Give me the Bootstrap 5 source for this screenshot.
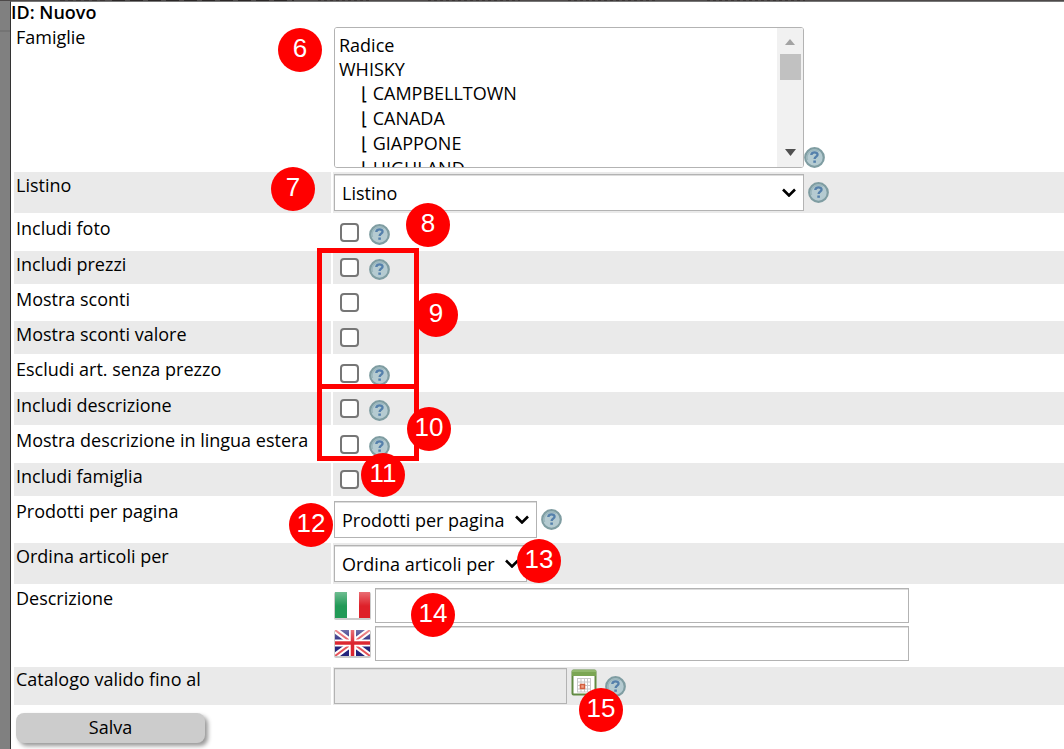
<!DOCTYPE html>
<html lang="it">
<head>
<meta charset="utf-8">
<meta name="viewport" content="width=device-width, initial-scale=1">
<title>Nuovo catalogo</title>
<link href="https://cdn.jsdelivr.net/npm/bootstrap@5.3.0/dist/css/bootstrap.min.css" rel="stylesheet">
<style>
  body { font-family: "Open Sans", "Noto Sans", sans-serif; font-size: 18px; line-height: 24px; color: #000; background: linear-gradient(#808080 30px, #747474 30px 32px, #808080 32px) no-repeat #808080; }
  .backdrop-top { height: 1px; background:
    repeating-linear-gradient(90deg, #3a3535 0 5px, #4d4949 5px 8px) 60px 0 / 48px 1px no-repeat,
    repeating-linear-gradient(90deg, #2b2727 0 13px, #4d4949 13px 18px) 112px 0 / 182px 1px no-repeat,
    repeating-linear-gradient(90deg, #3a3535 0 3px, #4d4949 3px 6px) 318px 0 / 54px 1px no-repeat,
    repeating-linear-gradient(90deg, #3a3535 0 3px, #4d4949 3px 6px) 428px 0 / 92px 1px no-repeat,
    repeating-linear-gradient(90deg, #3a3535 0 3px, #4d4949 3px 6px) 568px 0 / 90px 1px no-repeat,
    repeating-linear-gradient(90deg, #3a3535 0 3px, #4d4949 3px 6px) 707px 0 / 98px 1px no-repeat,
    #4d4949; }
  .sheet { margin-left: 10px; border-left: 1px solid #333; border-top: 1px solid #777; background: #fff; min-height: calc(100vh - 1px); }
  .sheet-title { font-size: 18px; font-weight: 600; line-height: 20px; margin: 0; }
  .form-rows { padding: 3px 0 0 3px; gap: 2px; }
  .form-line { display: grid; grid-template-columns: 317px 1fr; column-gap: 2px; min-height: 34px; }
  .form-line > * { padding: 1px 0 0 2px; }
  .form-line > :last-child { padding: 0 0 0 1px; }
  .form-line:nth-child(even) > * { background: #eaeaea; }
  .line-list { min-height: 145px; }
  .line-select { min-height: 41px; }
  .line-pages { min-height: 43px; }
  .line-short { min-height: 33px; }
  .line-text { min-height: 79px; }
  .line-date { min-height: 38px; }
  .line-list > label, .line-text > label, .line-date > label { padding-top: 0; }
  .field { border: 1px solid #b3b3b3; background-color: #fff; border-radius: 0; color: #000; height: 37px; box-shadow: inset 0 1px 0 #ddd; }
  .field-select { appearance: none; padding: 0 28px 0 7px; background-repeat: no-repeat; background-position: right 7px center;
    background-image: url("data:image/svg+xml,%3Csvg xmlns='http://www.w3.org/2000/svg' width='14' height='9' viewBox='0 0 14 9'%3E%3Cpath d='M1 1.5l6 6 6-6' fill='none' stroke='%23000' stroke-width='2.6'/%3E%3C/svg%3E"); }
  .w-wide { width: 470px; }
  .w-pages { width: 203px; }
  .w-order { width: 193px; }
  .w-text { width: 534px; height: 35px; }
  .w-date { width: 233px; height: 36px; background-color: #eaeaea; }
  .text-pair { gap: 3px; padding-bottom: 2px !important; }
  .list-cell { padding-bottom: 2px !important; }
  .family-list { width: 470px; height: 141px; border: 1px solid #b3b3b3; border-radius: 3px; padding: 5px 0 0; color: #000; background: #fff; overflow-y: scroll; scrollbar-width: none; }
  .family-list option { padding: 0 4px; min-height: 23px; }
  .family-list .sub { padding-left: 26px; min-height: 25px; }
  .family-scroll { position: absolute; top: 1px; right: 1px; bottom: 1px; width: 26px; background: #f1f1f1; border-radius: 0 2px 2px 0; padding: 11px 0; pointer-events: none; }
  .family-thumb { width: 21px; height: 26px; background: #c1c1c1; margin-top: 9px; }
  .tick.form-check-input { width: 19px; height: 19px; margin: 0 10px 0 6px; border: 2px solid #767676; border-radius: 4px; background-color: #fff; }
  .help { width: 21px; height: 21px; flex: none; }
  .flag { width: 37px; height: 29px; flex: none; }
  .save { width: 189px; height: 30px; border: 0; border-radius: 8px; background: #ccc; color: #000; box-shadow: 3px 3px 4px #999; margin: 6px 0 0 2px; padding: 0 0 3px; }
  .pin { position: absolute; width: 44px; height: 44px; border-radius: 50%; background: #f00; color: #fff; font: 26px/40px "Liberation Sans", sans-serif; text-align: center; }
  .frame { position: absolute; border: 5px solid #f00; }
  #frame-a { left: 317px; top: 248px; width: 102px; height: 141px; }
  #frame-b { left: 317px; top: 384px; width: 102px; height: 77px; }
  #pin-6 { left: 278px; top: 28px; }
  #pin-7 { left: 271px; top: 167px; }
  #pin-8 { left: 406px; top: 203px; }
  #pin-9 { left: 414px; top: 293px; }
  #pin-10 { left: 407px; top: 407px; }
  #pin-11 { left: 361px; top: 453px; }
  #pin-12 { left: 289px; top: 503px; }
  #pin-13 { left: 517px; top: 539px; }
  #pin-14 { left: 411px; top: 593px; }
  #pin-15 { left: 579px; top: 688px; }
</style>
</head>
<body class="position-relative">
<svg class="d-none" aria-hidden="true">
  <symbol id="i-help" viewBox="0 0 21 21">
    <circle cx="10.500" cy="10.500" r="9.300" fill="#b5cbd1" stroke="#7f9da2" stroke-width="2.200"/>
    <path d="M3.500 13A7.500 7.500 0 0 1 15 4.500" fill="none" stroke="#9bb7bd" stroke-width="1.500"/>
    <path d="M7.300 8c.2-3.600 6.600-3.400 6.200-.2-.2 1.900-2.700 1.900-2.900 4.200" fill="none" stroke="#5580ab" stroke-width="2.400"/>
    <rect x="9.300" y="13.500" width="2.600" height="2.300" fill="#5580ab"/>
  </symbol>
</svg>
<div class="backdrop-top"></div>
<main class="sheet">
  <h1 class="sheet-title">ID: Nuovo</h1>
  <form class="form-rows d-flex flex-column">
    <div class="form-line line-list">
      <label for="famiglie">Famiglie</label>
      <div class="list-cell d-flex align-items-end">
        <div class="position-relative d-flex">
          <select id="famiglie" class="family-list" multiple>
            <option>Radice</option><option>WHISKY</option>
            <option class="sub">⌊ CAMPBELLTOWN</option><option class="sub">⌊ CANADA</option><option class="sub">⌊ GIAPPONE</option><option class="sub">⌊ HIGHLAND</option>
            <option class="sub">⌊ INDIA</option><option class="sub">⌊ IRLANDA</option><option class="sub">⌊ ISLAY</option><option class="sub">⌊ ISOLE</option><option class="sub">⌊ ITALIA</option><option class="sub">⌊ LOWLAND</option>
            <option class="sub">⌊ SPEYSIDE</option><option class="sub">⌊ TAIWAN</option><option class="sub">⌊ USA</option>
            <option>RUM</option><option>GIN</option><option>VODKA</option><option>COGNAC</option><option>GRAPPA</option><option>VINI</option>
          </select>
          <div class="family-scroll d-flex flex-column align-items-center" aria-hidden="true">
            <svg width="10" height="6"><path d="M0 6l5-6 5 6z" fill="#a3a3a3"/></svg>
            <div class="family-thumb"></div>
            <svg class="mt-auto" width="11" height="7"><path d="M0 0h11L5.500 7z" fill="#505050"/></svg>
          </div>
        </div>
        <svg class="help" role="img" aria-label="Aiuto"><use href="#i-help"/></svg>
      </div>
    </div>
    <div class="form-line line-select">
      <label for="listino">Listino</label>
      <div class="d-flex align-items-center">
        <select id="listino" class="field field-select w-wide"><option>Listino</option></select>
        <svg class="help ms-1" role="img" aria-label="Aiuto"><use href="#i-help"/></svg>
      </div>
    </div>
    <div class="form-line">
      <label for="foto">Includi foto</label>
      <div class="d-flex align-items-center"><input id="foto" type="checkbox" class="form-check-input tick"><svg class="help mt-1" role="img" aria-label="Aiuto"><use href="#i-help"/></svg></div>
    </div>
    <div class="form-line line-short">
      <label for="prezzi">Includi prezzi</label>
      <div class="d-flex align-items-center"><input id="prezzi" type="checkbox" class="form-check-input tick"><svg class="help mt-1" role="img" aria-label="Aiuto"><use href="#i-help"/></svg></div>
    </div>
    <div class="form-line line-short">
      <label for="sconti">Mostra sconti</label>
      <div class="d-flex align-items-center"><input id="sconti" type="checkbox" class="form-check-input tick"></div>
    </div>
    <div class="form-line line-short">
      <label for="valore">Mostra sconti valore</label>
      <div class="d-flex align-items-center"><input id="valore" type="checkbox" class="form-check-input tick"></div>
    </div>
    <div class="form-line">
      <label for="escludi">Escludi art. senza prezzo</label>
      <div class="d-flex align-items-center"><input id="escludi" type="checkbox" class="form-check-input tick"><svg class="help mt-1" role="img" aria-label="Aiuto"><use href="#i-help"/></svg></div>
    </div>
    <div class="form-line line-short">
      <label for="descr">Includi descrizione</label>
      <div class="d-flex align-items-center"><input id="descr" type="checkbox" class="form-check-input tick"><svg class="help mt-1" role="img" aria-label="Aiuto"><use href="#i-help"/></svg></div>
    </div>
    <div class="form-line">
      <label for="lingua" class="text-nowrap">Mostra descrizione in lingua estera</label>
      <div class="d-flex align-items-center"><input id="lingua" type="checkbox" class="form-check-input tick"><svg class="help mt-1" role="img" aria-label="Aiuto"><use href="#i-help"/></svg></div>
    </div>
    <div class="form-line line-short">
      <label for="famiglia">Includi famiglia</label>
      <div class="d-flex align-items-center"><input id="famiglia" type="checkbox" class="form-check-input tick"></div>
    </div>
    <div class="form-line line-pages">
      <label for="pagina">Prodotti per pagina</label>
      <div class="d-flex align-items-center">
        <select id="pagina" class="field field-select w-pages"><option>Prodotti per pagina</option></select>
        <svg class="help ms-1" role="img" aria-label="Aiuto"><use href="#i-help"/></svg>
      </div>
    </div>
    <div class="form-line line-select">
      <label for="ordina">Ordina articoli per</label>
      <div class="d-flex align-items-center"><select id="ordina" class="field field-select w-order"><option>Ordina articoli per</option></select></div>
    </div>
    <div class="form-line line-text">
      <label for="desc-it">Descrizione</label>
      <div class="text-pair d-flex flex-column justify-content-center">
        <div class="d-flex align-items-center gap-1">
          <svg class="flag" viewBox="0 0 37 29" role="img" aria-label="Italiano">
            <defs><linearGradient id="gloss" x2="0" y2="1"><stop stop-color="#fff" stop-opacity=".35"/><stop offset="1" stop-color="#fff" stop-opacity="0"/></linearGradient></defs>
            <rect x="0" y="1" width="37" height="28" rx="2" fill="#ccc"/>
            <path fill="#229a57" d="M1 1h12v26H1z"/><path fill="#fff" d="M13 1h12v26H13z"/><path fill="#de2029" d="M25 1h11v26H25z"/><path fill="url(#gloss)" d="M1 1h35v14H1z"/>
          </svg>
          <input id="desc-it" type="text" class="field w-text" aria-label="Descrizione in italiano">
        </div>
        <div class="d-flex align-items-center gap-1">
          <svg class="flag" viewBox="0 0 37 29" role="img" aria-label="English">
            <rect x="0" y="1" width="37" height="28" rx="2" fill="#ccc"/>
            <svg x="1" y="1" width="35" height="26" viewBox="0 0 35 26"><path fill="#24247c" d="M0 0h35v26H0z"/>
            <path d="M0 0l35 26M35 0L0 26" stroke="#fff" stroke-width="6"/><path d="M0 0l35 26M35 0L0 26" stroke="#e5555b" stroke-width="2"/>
            <path d="M17.500 0v26M0 13h35" stroke="#fff" stroke-width="7"/><path d="M17.500 0v26M0 13h35" stroke="#dc2630" stroke-width="3.500"/><path fill="url(#gloss)" d="M0 0h35v13H0z"/></svg>
          </svg>
          <input id="desc-en" type="text" class="field w-text" aria-label="Descrizione in inglese">
        </div>
      </div>
    </div>
    <div class="form-line line-date">
      <label for="fino">Catalogo valido fino al</label>
      <div class="d-flex align-items-center">
        <input id="fino" type="text" class="field w-date" readonly>
        <button type="button" class="btn p-0 border-0 d-flex ms-1 mb-2" aria-label="Apri calendario">
          <svg width="26" height="27" viewBox="0 0 26 27">
            <rect x="1.500" y="1.500" width="23" height="24" rx="1" fill="#fff" stroke="#628b43" stroke-width="2"/>
            <path fill="#7ba653" d="M1 1h24v6H1z"/><path stroke="#a8c988" d="M1 2h24"/>
            <path d="M6 9.500h14M6 13h14M6 16.500h14M6 20h14M6 23h14M6.500 9v14M10 9v14M13.500 9v14M16.500 9v14M19.500 9v14" stroke="#c9c9c9" fill="none"/>
            <path d="M9.500 15.500h4v4h-4z" fill="#f0a58c" stroke="#d35f3e" stroke-width="1.500"/>
          </svg>
        </button>
        <svg class="help ms-2" role="img" aria-label="Aiuto"><use href="#i-help"/></svg>
      </div>
    </div>
    <div><button type="submit" class="save">Salva</button></div>
  </form>
</main>
<div class="frame" id="frame-a"></div>
<div class="frame" id="frame-b"></div>
<span class="pin" id="pin-6">6</span>
<span class="pin" id="pin-7">7</span>
<span class="pin" id="pin-8">8</span>
<span class="pin" id="pin-9">9</span>
<span class="pin" id="pin-10">10</span>
<span class="pin" id="pin-11">11</span>
<span class="pin" id="pin-12">12</span>
<span class="pin" id="pin-13">13</span>
<span class="pin" id="pin-14">14</span>
<span class="pin" id="pin-15">15</span>
<script src="https://cdn.jsdelivr.net/npm/bootstrap@5.3.0/dist/js/bootstrap.bundle.min.js"></script>
</body>
</html>
